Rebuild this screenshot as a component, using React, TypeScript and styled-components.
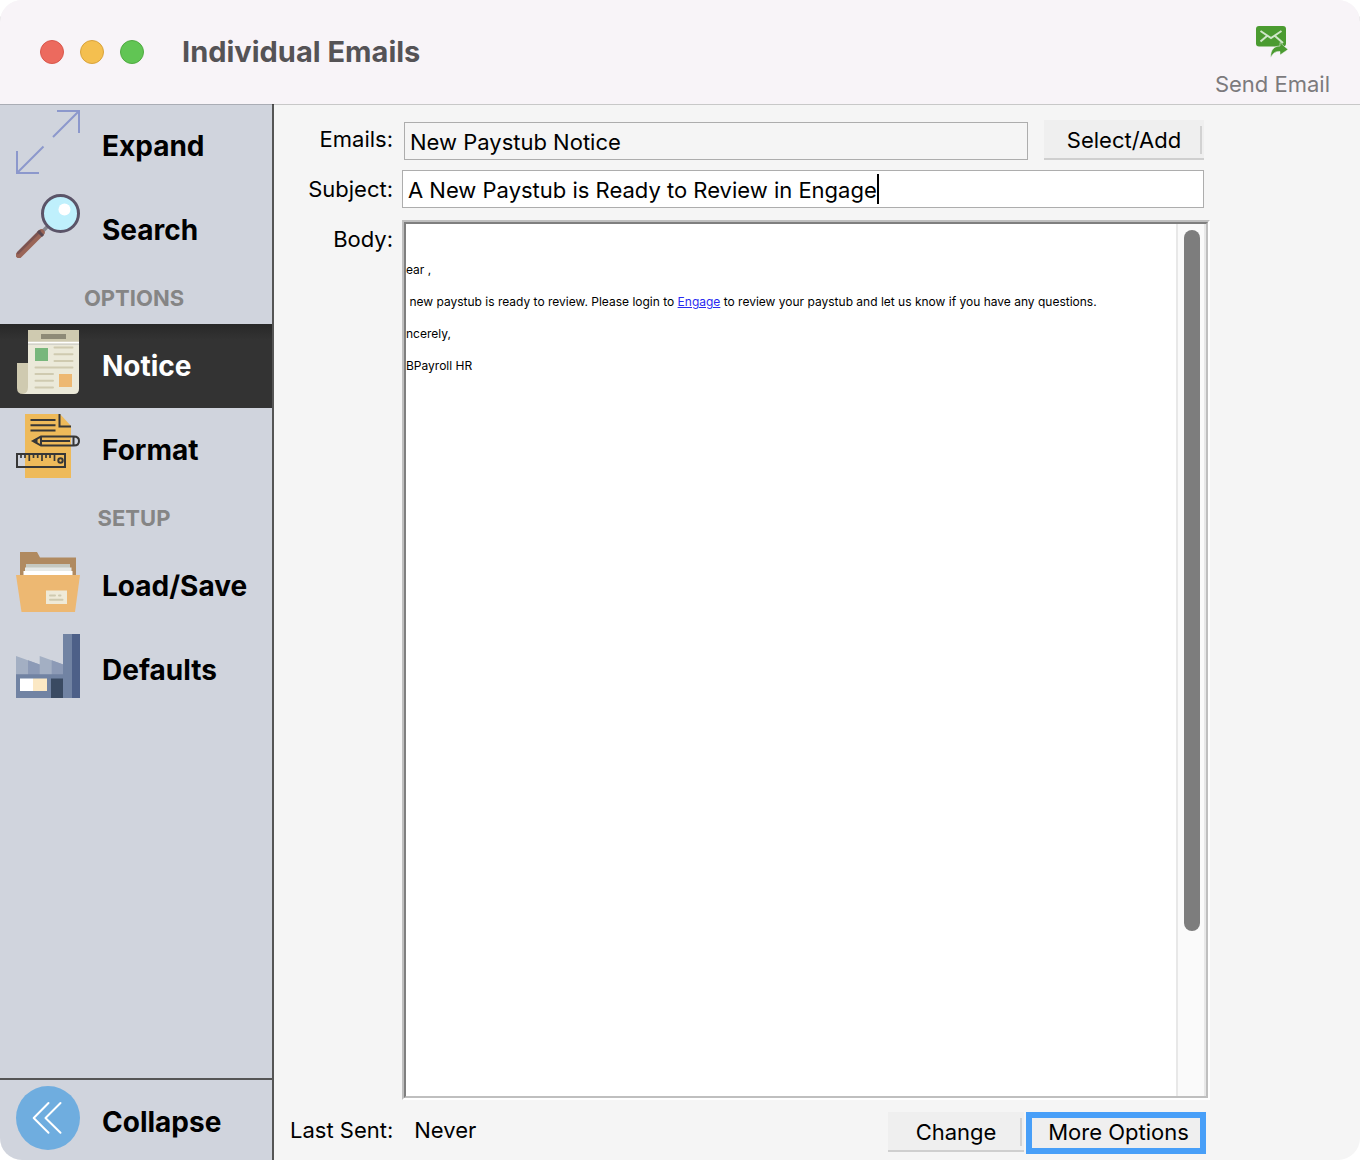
import React, { useState } from "react";
import styled, { createGlobalStyle } from "styled-components";

const GlobalStyle = createGlobalStyle`
  *, *::before, *::after { box-sizing: border-box; }
  body { margin: 0; background: #fff; }
  body, button, input { font-family: Inter, "Liberation Sans", sans-serif; }
  button { border: 0; padding: 0; cursor: pointer; }
`;

const Window = styled.div`
  display: flex;
  flex-direction: column;
  min-height: 100vh;
  overflow: hidden;
  border-radius: 22px;
  background: #f5f5f5;
  color: #000;
`;

const TitleBar = styled.header`
  position: relative;
  display: flex;
  align-items: center;
  height: 104px;
  padding: 0 30px 0 40px;
  background: #f8f4f8;
  box-shadow: 0 1px 0 rgba(0, 0, 0, 0.18);
`;

const Lights = styled.div`
  display: flex;
  gap: 16px;
`;

const Light = styled.button<{ $fill: string; $edge: string }>`
  width: 24px;
  height: 24px;
  border: 1px solid ${(p) => p.$edge};
  border-radius: 50%;
  background: ${(p) => p.$fill};
`;

const Title = styled.h1`
  flex: 1;
  margin: 0 0 0 38px;
  font-size: 29px;
  font-weight: 700;
  line-height: 36px;
  color: #555356;
`;

const SendButton = styled.button`
  display: flex;
  flex-direction: column;
  align-items: center;
  gap: 12px;
  padding-top: 20px;
  background: transparent;
  font-size: 22px;
  line-height: 28px;
  color: #7c7a7d;
`;

const Main = styled.div`
  display: flex;
  flex: 1;
`;

const Sidebar = styled.nav`
  display: flex;
  flex-direction: column;
  width: 274px;
  border-right: 2px solid #555;
  background: #d0d4dd;
`;

const SectionTitle = styled.h2`
  margin: 0;
  padding-right: 4px;
  font-size: 22px;
  font-weight: 700;
  line-height: 52px;
  text-align: center;
  color: #858585;
`;

const NavButton = styled.button<{ $active?: boolean }>`
  display: flex;
  gap: 22px;
  width: 100%;
  height: 84px;
  padding: 0 16px;
  background: ${(p) => (p.$active ? "linear-gradient(#282828, #333 16px)" : "transparent")};
  color: ${(p) => (p.$active ? "#fff" : "#000")};
  font-size: 28px;
  font-weight: 700;
  line-height: 84px;
  text-align: left;

  svg {
    flex: none;
    margin-top: 6px;
  }
`;

const SidebarFooter = styled.div`
  height: 82px;
  margin-top: auto;
  overflow: hidden;
  border-top: 2px solid #555;
`;

const Content = styled.main`
  display: flex;
  flex: 1;
  flex-direction: column;
  min-width: 0;
  padding: 16px 150px 6px 16px;
  font-size: 22px;
  line-height: 28px;
`;

const Form = styled.form`
  display: grid;
  flex: 1;
  grid-template-columns: 103px minmax(0, 1fr);
  grid-template-rows: 40px 40px 1fr;
  column-gap: 9px;
  row-gap: 10px;
`;

const Label = styled.label`
  padding-top: 5px;
  text-align: right;
`;

const EmailRow = styled.div`
  display: flex;
  align-items: flex-end;
  gap: 16px;
  padding: 0 6px 0 2px;
`;

const EmailInput = styled.input`
  flex: 1;
  min-width: 0;
  height: 38px;
  padding: 2px 5px 0;
  border: 1px solid #adadad;
  background: #f5f5f5;
  font-size: 22px;
  outline: 0;
`;

const SubjectField = styled.div`
  display: flex;
  align-items: center;
  height: 38px;
  margin-right: 6px;
  padding-left: 5px;
  border: 1px solid #adadad;
  background: #fff;
`;

const SubjectInput = styled.input`
  field-sizing: content;
  max-width: 100%;
  height: 34px;
  padding: 2px 0 0;
  border: 0;
  background: transparent;
  caret-color: transparent;
  font-size: 22px;
  outline: 0;
`;

const Caret = styled.span`
  width: 2px;
  height: 30px;
  background: #000;
`;

const BodyFrame = styled.div`
  border: 2px solid;
  border-color: #bfbfbf #fff #fff #bfbfbf;
`;

const BodyPane = styled.div`
  display: flex;
  height: 100%;
  border: 2px solid;
  border-color: #7f7f7f #bfbfbf #bfbfbf #7f7f7f;
  background: #fff;
`;

const Message = styled.div`
  flex: 1;
  min-width: 0;
  padding-top: 38px;
  overflow: hidden;
  font-size: 12px;
  line-height: 16px;
  outline: 0;

  p {
    margin: 0 0 16px;
    white-space: pre-wrap;
  }

  a {
    color: #2a2af0;
  }
`;

const ScrollTrack = styled.div`
  width: 30px;
  padding: 6px 4px 0 6px;
  border: solid #e8e8e8;
  border-width: 0 2px;
  background: #fafafa;
`;

const ScrollThumb = styled.div`
  width: 16px;
  height: 81%;
  border-radius: 8px;
  background: #7d7d7d;
`;

const Footer = styled.footer`
  display: flex;
  align-items: flex-start;
  gap: 2px;
  margin-top: 12px;
  padding-right: 4px;
`;

const Status = styled.dl`
  display: flex;
  flex: 1;
  gap: 21px;
  margin: 0;
  padding-top: 4px;

  dd {
    margin: 0;
  }
`;

const FlatButton = styled.button<{ $width: number }>`
  width: ${(p) => p.$width}px;
  height: 40px;
  padding-top: 2px;
  border-bottom: 2px solid #cfcfcf;
  background: linear-gradient(#d2d2d2, #d2d2d2) right 2px top 6px / 2px 28px no-repeat #efefef;
  font-size: 22px;
  line-height: 28px;
`;

const FocusButton = styled.button`
  width: 180px;
  height: 42px;
  border: 6px solid #489ff8;
  background: #efefef;
  font-size: 22px;
  line-height: 28px;
  padding: 0 0 2px 5px;
  white-space: nowrap;
`;

const Icon = ({ size = 64, children }: { size?: number; children: React.ReactNode }) => (
  <svg width={size} height={size} viewBox={`0 0 ${size} ${size}`} fill="none" aria-hidden="true">
    {children}
  </svg>
);

const SendIcon = () => (
  <Icon size={32}>
    <rect width="30" height="20.5" rx="3" fill="#4b9b31" />
    <path d="M4.500 5 15 12 25.500 5M4.500 15.500 11 10M19 10 27 17" stroke="#cfe6c8" strokeWidth="2" />
    <path d="M14.700 31.500C14.500 24 18 20 24 20V16.500L32 23.500 24 29V25.500C19.500 25 17 27 14.700 31.500Z" fill="#4b9b31" stroke="#f8f4f8" strokeWidth=".5" />
  </Icon>
);

const ExpandIcon = () => (
  <Icon>
    <path d="M37 27 63 1M41 1H63V23M27.500 36.500 1 63M1 41V63H23" stroke="#8c98cc" strokeWidth="2" />
  </Icon>
);

const SearchIcon = () => (
  <Icon>
    <path d="M32 32 26 38" stroke="#898890" strokeWidth="3.500" />
    <path d="M25.500 38.500 3 61" stroke="#9a6557" strokeWidth="6.500" strokeLinecap="round" />
    <path d="M24 37 2 59" stroke="#7c5350" strokeWidth="2.500" strokeLinecap="round" />
    <path d="M22 37 27 42" stroke="#5b4850" strokeWidth="3" />
    <circle cx="44.500" cy="19.500" r="18" fill="#bff0fc" stroke="#5b5468" strokeWidth="3" />
    <circle cx="48.500" cy="15.500" r="6" fill="#fff" />
  </Icon>
);

const NoticeIcon = () => (
  <Icon>
    <path d="M1 33H13V64H7Q1 64 1 58Z" fill="#cfcab0" />
    <path d="M12 12H63V59Q63 64 58 64H7Q12 63 12 57Z" fill="#ebe9d9" />
    <path d="M12 0H63V12H12Z" fill="#cfcab0" />
    <path d="M12 12.500H63" stroke="#fff" strokeWidth="1.500" />
    <path d="M12 14.200H63" stroke="#c9c9c4" strokeWidth="1" />
    <path d="M25 4H50V9H25Z" fill="#8e8a77" />
    <path d="M19 18H32V31H19Z" fill="#78b77c" />
    <path d="M43 44H56V57H43Z" fill="#edb872" />
    <path d="M38.500 17.500H56.500M38.500 24.200H56.500M38.500 31H56.500M19.500 37.500H56.500M19.500 44H37M19.500 50.800H37M19.500 57.500H37" stroke="#cfcab0" strokeWidth="2" strokeLinecap="round" />
  </Icon>
);

const FormatIcon = () => (
  <Icon>
    <path d="M9 0H44L55 12V64H9Z" fill="#eeba5a" />
    <g stroke="#373737" strokeWidth="2">
      <path d="M43.500 0V12.500H55M14.500 6H39.500M14.500 11.300H39.500M14.500 16.500H39.500" />
      <path d="M25 22.500H58Q63 22.500 63 27T58 31.500H25L17 27ZM25 22V32M25 27H54M57.500 22.500V31.500" />
      <path d="M17 27 21 24.500V29.500Z" fill="#373737" strokeWidth="1" />
      <path d="M1 40H49V53H1Z" />
      <path d="M5 40V44M9 40V44M13.300 40V47M17.500 40V44M21.700 40V44M26 40V47M30 40V44M34 40V44M38.500 40V47" strokeWidth="1.700" />
      <circle cx="44.500" cy="46.500" r="2.200" />
    </g>
  </Icon>
);

const FolderIcon = () => (
  <Icon>
    <path d="M4 2H21L24 7.500H60V30H4Z" fill="#b08a60" />
    <path d="M10 14H54V25H10Z" fill="#c5c8c0" />
    <path d="M9 17.500H55.500V25H9Z" fill="#e6e9e7" />
    <path d="M7.500 21H56.500V26H7.500Z" fill="#fff" />
    <path d="M0 25H64L59 62H5.500Z" fill="#edb872" />
    <path d="M30 40.500H51V54H30Z" fill="#efead8" />
    <path d="M34 45.500H39M43 45.500H44.500M34 49.700H46.500" stroke="#cfcab0" strokeWidth="2" strokeLinecap="round" />
  </Icon>
);

const FactoryIcon = () => (
  <Icon>
    <path d="M0 22 23.700 30.500V22L47.300 30.500V41H0Z" fill="#a3afc3" />
    <path d="M12 26.300 23.700 30.500V41H12ZM35.700 26.300 47.300 30.500V41H35.700Z" fill="#8c9ab6" />
    <path d="M0 40.300H47V0H56V64H0Z" fill="#7183a3" />
    <path d="M56 0H64V64H56Z" fill="#4d6088" />
    <path d="M4 44.500H17V57H4Z" fill="#fff" />
    <path d="M17 44.500H31V57H17Z" fill="#fbe8c4" />
    <path d="M35 44.500H47V64H35Z" fill="#3a4a62" />
  </Icon>
);

const CollapseIcon = () => (
  <Icon>
    <circle cx="32" cy="32" r="32" fill="#6faddf" />
    <path d="M32.500 17 17.700 32 32.500 46.700M44.500 17 29.500 32 44.500 46.700" stroke="#fff" strokeWidth="2" strokeLinecap="round" strokeLinejoin="round" />
  </Icon>
);

export default function App() {
  const [email, setEmail] = useState("New Paystub Notice");
  const [subject, setSubject] = useState("A New Paystub is Ready to Review in Engage");

  return (
    <>
      <GlobalStyle />
      <Window>
        <TitleBar>
          <Lights>
            <Light $fill="#ec6a5e" $edge="#d9574c" aria-label="Close" />
            <Light $fill="#f4bf4f" $edge="#d9a33c" aria-label="Minimize" />
            <Light $fill="#61c554" $edge="#50ab42" aria-label="Zoom" />
          </Lights>
          <Title>Individual Emails</Title>
          <SendButton>
            <SendIcon />
            Send Email
          </SendButton>
        </TitleBar>
        <Main>
          <Sidebar>
            <NavButton><ExpandIcon />Expand</NavButton>
            <NavButton><SearchIcon />Search</NavButton>
            <SectionTitle>OPTIONS</SectionTitle>
            <NavButton $active aria-current="page"><NoticeIcon />Notice</NavButton>
            <NavButton><FormatIcon />Format</NavButton>
            <SectionTitle>SETUP</SectionTitle>
            <NavButton><FolderIcon />Load/Save</NavButton>
            <NavButton><FactoryIcon />Defaults</NavButton>
            <SidebarFooter>
              <NavButton><CollapseIcon />Collapse</NavButton>
            </SidebarFooter>
          </Sidebar>
          <Content>
            <Form onSubmit={(e) => e.preventDefault()}>
              <Label htmlFor="email">Emails:</Label>
              <EmailRow>
                <EmailInput id="email" value={email} onChange={(e) => setEmail(e.target.value)} />
                <FlatButton type="button" $width={160}>Select/Add</FlatButton>
              </EmailRow>
              <Label htmlFor="subject">Subject:</Label>
              <SubjectField>
                <SubjectInput id="subject" value={subject} onChange={(e) => setSubject(e.target.value)} />
                <Caret />
              </SubjectField>
              <Label as="span" id="body-label">Body:</Label>
              <BodyFrame>
                <BodyPane>
                  <Message
                    role="textbox"
                    aria-multiline="true"
                    aria-labelledby="body-label"
                    contentEditable
                    suppressContentEditableWarning
                    spellCheck={false}
                  >
                    <p>ear ,</p>
                    <p>{" new paystub is ready to review. Please login to "}<a href="#engage">Engage</a>{" to review your paystub and let us know if you have any questions."}</p>
                    <p>ncerely,</p>
                    <p>BPayroll HR</p>
                  </Message>
                  <ScrollTrack>
                    <ScrollThumb />
                  </ScrollTrack>
                </BodyPane>
              </BodyFrame>
            </Form>
            <Footer>
              <Status>
                <dt>Last Sent:</dt>
                <dd>Never</dd>
              </Status>
              <FlatButton type="button" $width={136}>Change</FlatButton>
              <FocusButton type="button">More Options</FocusButton>
            </Footer>
          </Content>
        </Main>
      </Window>
    </>
  );
}
